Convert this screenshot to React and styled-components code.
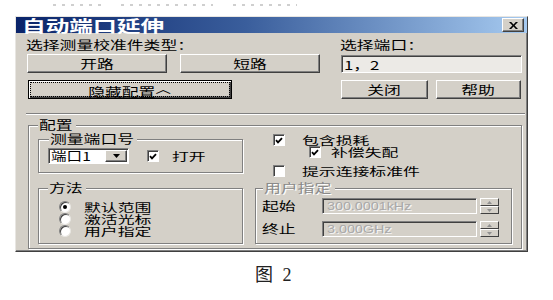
import React from 'react';
import styled, { createGlobalStyle } from 'styled-components';

const BG = '#d4d0c8';

const Global = createGlobalStyle`
  html, body { margin: 0; padding: 0; background: #fff; }
  body {
    width: 553px; height: 300px; overflow: hidden;
    font-family: "Noto Sans CJK SC", "Noto Sans", sans-serif;
    font-size: 12px;
    color: #000;
  }
`;

// the screenshot is stretched sideways, so text is widened the same way
const Txt = styled.span`
  display: inline-block;
  white-space: nowrap;
  transform: scaleX(${p => p.$sx || 1.4});
  transform-origin: ${p => p.$o || 'left'} center;
`;

const Caret = styled.span`
  vertical-align: 4px;
  font-size: 11px;
`;

const Page = styled.div`
  display: flex;
  flex-direction: column;
  align-items: flex-start;
  padding: 3px 0 0 15px;
`;

const Strip = styled.div`
  display: flex;
  height: 3px;
  align-items: flex-end;
  margin-left: 38px;
`;

const Dots = styled.span`
  width: ${p => p.$w}px;
  margin-left: ${p => p.$ml || 0}px;
  height: 2px;
  background: repeating-linear-gradient(to right, #cfcfcf 0 3px, transparent 3px 9px);
`;

const Dialog = styled.div`
  margin-top: 10px;
  width: 513px;
  height: 236px;
  box-sizing: border-box;
  background: ${BG};
  border: 1px solid;
  border-color: #e8e6e2 #404040 #404040 #e8e6e2;
  box-shadow: inset -1px -1px 0 #808080;
  display: flex;
  flex-direction: column;
`;

const TitleBar = styled.div`
  height: 16px;
  display: flex;
  align-items: center;
  justify-content: space-between;
  padding: 0 3px 0 6px;
  background: linear-gradient(to right, #0a246a, #3a5e9c 45%, #a6caf0);
`;

const Title = styled.div`
  color: #fff;
  font-weight: bold;
  font-size: 16px;
  line-height: 16px;
`;

const CloseBtn = styled.div`
  width: 22px;
  height: 14px;
  box-sizing: border-box;
  background: ${BG};
  border: 1px solid;
  border-color: #fff #404040 #404040 #fff;
  box-shadow: inset -1px -1px 0 #808080;
  display: flex;
  align-items: center;
  justify-content: center;
`;

const Body = styled.div`
  display: flex;
  flex-direction: column;
  align-items: flex-start;
  padding: 5px 5px 0 11px;
`;

const TopGrid = styled.div`
  display: grid;
  grid-template-columns: 293px 181px;
  column-gap: 21px;
`;

const Col = styled.div`
  display: flex;
  flex-direction: column;
  align-items: flex-start;
`;

const Label = styled.div`
  height: 14px;
  line-height: 14px;
  margin-left: -1px;
`;

const BtnRow = styled.div`
  display: flex;
  gap: ${p => p.$gap || 8}px;
  margin-top: ${p => p.$mt || 0}px;
`;

const Btn = styled.div`
  width: ${p => p.$w}px;
  height: 19px;
  box-sizing: border-box;
  background: ${BG};
  border: 1px solid;
  border-color: #fff #404040 #404040 #fff;
  box-shadow: inset -1px -1px 0 #808080;
  display: flex;
  align-items: center;
  justify-content: center;
  line-height: 14px;
`;

const DefaultBtn = styled(Btn)`
  margin-left: 1px;
  border: 1px solid #000;
  box-shadow: inset 1px 1px 0 #fff, inset -1px -1px 0 #404040, inset -2px -2px 0 #808080;
  outline: 1px dotted #000;
  outline-offset: -3px;
`;

const Field = styled.div`
  margin-top: 3px;
  width: 181px;
  height: 18px;
  box-sizing: border-box;
  background: #eceae6;
  border: 1px solid;
  border-color: #808080 #fff #fff #808080;
  box-shadow: inset 1px 1px 0 #404040;
  display: flex;
  align-items: center;
  padding-left: 2px;
`;

const Separator = styled.div`
  margin: 14px 0 0 -1px;
  width: 499px;
  height: 0;
  border-top: 1px solid #808080;
  border-bottom: 1px solid #fff;
`;

const Group = styled.fieldset`
  margin: 0;
  min-width: 0;
  box-sizing: border-box;
  padding: 0 ${p => p.$pr || 0}px ${p => p.$pb || 0}px ${p => p.$lx}px;
  border: 1px solid #808080;
  box-shadow: inset 1px 1px 0 #fff, 1px 1px 0 #fff;
`;

const ConfigGroup = styled(Group)`
  margin: 3px 0 0 1px;
  width: 494px;
`;

const Legend = styled.legend`
  margin: 0;
  padding: 0 1px;
  width: ${p => p.$w}px;
  height: 14px;
  line-height: 14px;
  background: ${BG};
  color: ${p => (p.$disabled ? '#8a8a8a' : '#000')};
  text-shadow: ${p => (p.$disabled ? '1px 1px 0 #fff' : 'none')};
`;

const ConfigGrid = styled.div`
  display: grid;
  grid-template-columns: 205px 257px;
  grid-template-rows: 41px 63px;
  column-gap: 12px;
  row-gap: 8px;
`;

const PortRow = styled.div`
  display: flex;
  align-items: center;
  margin: 2px 0 0 -1px;
`;

const Select = styled.div`
  width: 81px;
  height: 16px;
  box-sizing: border-box;
  background: #fff;
  border: 1px solid;
  border-color: #808080 #fff #fff #808080;
  box-shadow: inset 1px 1px 0 #404040;
  display: flex;
  align-items: center;
  justify-content: space-between;
  padding: 1px 1px 1px 2px;
  line-height: 12px;
`;

const DropBtn = styled.div`
  width: 22px;
  height: 12px;
  box-sizing: border-box;
  background: ${BG};
  border: 1px solid;
  border-color: #fff #404040 #404040 #fff;
  box-shadow: inset -1px -1px 0 #808080;
  display: flex;
  align-items: center;
  justify-content: center;
`;

const CheckRow = styled.div`
  display: flex;
  align-items: center;
  height: 12px;
  line-height: 12px;
  font-size: 11px;
  margin-left: ${p => p.$ml || 0}px;
  margin-top: ${p => p.$mt || 0}px;
`;

const Box = styled.span`
  flex: none;
  width: 12px;
  height: 12px;
  box-sizing: border-box;
  margin-right: ${p => p.$gap || 13}px;
  background: #fff;
  border: 1px solid;
  border-color: #808080 #fff #fff #808080;
  box-shadow: inset 1px 1px 0 #404040;
  display: flex;
  align-items: center;
  justify-content: center;
`;

const Checks = styled.div`
  display: flex;
  flex-direction: column;
  padding-top: 2px;
`;

const RadioList = styled.div`
  display: flex;
  flex-direction: column;
  margin: 6px 0 0 11px;
`;

const Radio = styled.span`
  flex: none;
  width: 12px;
  height: 12px;
  box-sizing: border-box;
  margin-right: 13px;
  border-radius: 50%;
  background: #fff;
  border: 1px solid;
  border-color: #808080 #e8e6e2 #e8e6e2 #808080;
  box-shadow: inset 1px 1px 0 #404040;
  display: flex;
  align-items: center;
  justify-content: center;
  &::after {
    content: '';
    width: 4px;
    height: 4px;
    border-radius: 50%;
    background: ${p => (p.$on ? '#000' : 'transparent')};
  }
`;

const RangeRows = styled.div`
  display: flex;
  flex-direction: column;
  gap: 7px;
  margin: 3px 0 0 -1px;
`;

const RangeRow = styled.div`
  display: flex;
  align-items: center;
  height: 16px;
`;

const RangeLabel = styled.span`
  width: 60px;
  line-height: 14px;
`;

const Input = styled.div`
  width: 155px;
  height: 16px;
  box-sizing: border-box;
  background: ${BG};
  border: 1px solid;
  border-color: #808080 #fff #fff #808080;
  box-shadow: inset 1px 1px 0 #404040;
  display: flex;
  align-items: center;
  padding-left: 4px;
  font-family: "Liberation Sans", "Noto Sans", sans-serif;
  font-size: 11px;
  color: #a8a8a8;
  text-shadow: 1px 1px 0 #f4f4f4;
`;

const Spinner = styled.div`
  margin-left: 3px;
  width: 19px;
  height: 16px;
  display: flex;
  flex-direction: column;
`;

const SpinHalf = styled.div`
  flex: 1;
  box-sizing: border-box;
  background: ${BG};
  border: 1px solid;
  border-color: #fff #404040 #404040 #fff;
  display: flex;
  align-items: center;
  justify-content: center;
`;

const Caption = styled.div`
  margin: 13px 0 0 240px;
  font-family: "Liberation Serif", "Noto Sans CJK SC", serif;
  font-size: 18px;
  line-height: 20px;
  word-spacing: 5px;
  color: #222;
`;

const CheckMark = () => (
  <svg width="8" height="7" viewBox="0 0 8 7">
    <path d="M1 3.2 L3 5.4 L7 1.2" fill="none" stroke="#000" strokeWidth="1.8" />
  </svg>
);

const Check = ({ on, gap, ml, mt, children }) => (
  <CheckRow $ml={ml} $mt={mt}>
    <Box $gap={gap}>{on && <CheckMark />}</Box>
    <Txt $sx={1.53}>{children}</Txt>
  </CheckRow>
);

const RadioItem = ({ on, children }) => (
  <CheckRow>
    <Radio $on={on} />
    <Txt $sx={1.53}>{children}</Txt>
  </CheckRow>
);

const Spin = () => (
  <Spinner>
    <SpinHalf>
      <svg width="5" height="3" viewBox="0 0 5 3"><path d="M0 3 L2.5 0 L5 3Z" fill="#909090" /></svg>
    </SpinHalf>
    <SpinHalf>
      <svg width="5" height="3" viewBox="0 0 5 3"><path d="M0 0 L2.5 3 L5 0Z" fill="#909090" /></svg>
    </SpinHalf>
  </Spinner>
);

export default function App() {
  return (
    <>
      <Global />
      <Page>
        <Strip>
          <Dots $w={48} />
          <Dots $w={92} $ml={20} />
          <Dots $w={64} $ml={20} />
        </Strip>
        <Dialog>
          <TitleBar>
            <Title><Txt $sx={1.48}>自动端口延伸</Txt></Title>
            <CloseBtn>
              <svg width="9" height="7" viewBox="0 0 9 7">
                <path d="M0 0 H2.2 L4.5 2.4 L6.8 0 H9 L5.6 3.5 L9 7 H6.8 L4.5 4.6 L2.2 7 H0 L3.4 3.5Z" fill="#000" />
              </svg>
            </CloseBtn>
          </TitleBar>
          <Body>
            <TopGrid>
              <Col>
                <Label><Txt>选择测量校准件类型：</Txt></Label>
                <BtnRow $gap={13} $mt={2}>
                  <Btn $w={140}><Txt $o="center">开路</Txt></Btn>
                  <Btn $w={140}><Txt $o="center">短路</Txt></Btn>
                </BtnRow>
                <BtnRow $mt={7}>
                  <DefaultBtn $w={204}><Txt $o="center">隐藏配置<Caret>︿</Caret></Txt></DefaultBtn>
                </BtnRow>
              </Col>
              <Col>
                <Label><Txt>选择端口：</Txt></Label>
                <Field><Txt>1，2</Txt></Field>
                <BtnRow $mt={7}>
                  <Btn $w={87}><Txt $o="center">关闭</Txt></Btn>
                  <Btn $w={85}><Txt $o="center">帮助</Txt></Btn>
                </BtnRow>
              </Col>
            </TopGrid>
            <Separator />
            <ConfigGroup $lx={9} $pr={9} $pb={4}>
              <Legend $w={36}><Txt>配置</Txt></Legend>
              <ConfigGrid>
                <Group $lx={10}>
                  <Legend $w={86}><Txt>测量端口号</Txt></Legend>
                  <PortRow>
                    <Select>
                      <Txt $sx={1.3}>端口1</Txt>
                      <DropBtn>
                        <svg width="7" height="4" viewBox="0 0 7 4"><path d="M0 0 H7 L3.5 4Z" fill="#000" /></svg>
                      </DropBtn>
                    </Select>
                    <Check on ml={18}>打开</Check>
                  </PortRow>
                </Group>
                <Checks>
                  <Check on ml={18} gap={17}>包含损耗</Check>
                  <Check on ml={54} gap={10}>补偿失配</Check>
                  <Check ml={18} gap={17} mt={7}>提示连接标准件</Check>
                </Checks>
                <Group $lx={9}>
                  <Legend $w={36}><Txt>方法</Txt></Legend>
                  <RadioList>
                    <RadioItem on>默认范围</RadioItem>
                    <RadioItem>激活光标</RadioItem>
                    <RadioItem>用户指定</RadioItem>
                  </RadioList>
                </Group>
                <Group $lx={7}>
                  <Legend $w={70} $disabled><Txt>用户指定</Txt></Legend>
                  <RangeRows>
                    <RangeRow>
                      <RangeLabel><Txt>起始</Txt></RangeLabel>
                      <Input><Txt $sx={1.3}>300.0001kHz</Txt></Input>
                      <Spin />
                    </RangeRow>
                    <RangeRow>
                      <RangeLabel><Txt>终止</Txt></RangeLabel>
                      <Input><Txt $sx={1.3}>3.000GHz</Txt></Input>
                      <Spin />
                    </RangeRow>
                  </RangeRows>
                </Group>
              </ConfigGrid>
            </ConfigGroup>
          </Body>
        </Dialog>
        <Caption>图 2</Caption>
      </Page>
    </>
  );
}
